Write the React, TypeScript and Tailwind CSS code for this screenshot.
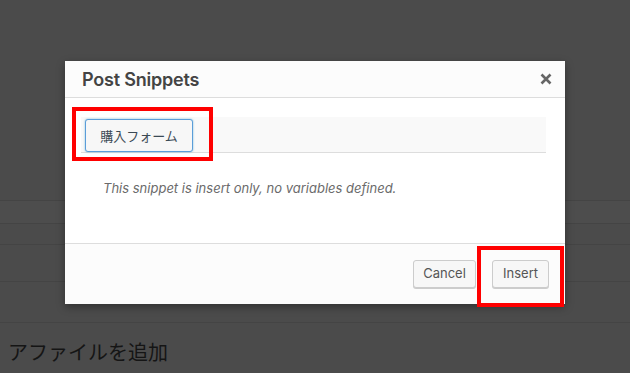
export default function App() {
  return (
    <div className="relative w-[630px] h-[373px] overflow-hidden bg-[#4b4b4b] font-['Inter','Noto_Sans_CJK_JP',sans-serif]">
      {/* page behind the overlay */}
      <div className="pt-[200px]">
        <div className="border-t border-[#444444] h-[23px] bg-[#4d4d4d]" />
        <div className="border-t border-[#444444] h-[21px]" />
        <div className="border-t border-[#444444] h-[37px]" />
        <div className="border-t border-[#444444] h-[41px]" />
        <div className="border-t border-[#444444] pl-[8px] pt-[16px] text-[20px] leading-[26px] text-[#151515] font-['Noto_Sans_CJK_JP',sans-serif]">
          アファイルを追加
        </div>
      </div>

      {/* modal */}
      <div className="absolute left-[65px] top-[61px] w-[500px] h-[243px] bg-white shadow-[0_3px_8px_rgba(0,0,0,0.35)] flex flex-col">
        <div className="h-[37px] bg-[#fcfcfc] border-b border-[#dddddd] flex items-center justify-between pl-[17px] pr-[13px]">
          <span className="text-[18px] font-semibold text-[#444444] tracking-[-0.2px]">Post Snippets</span>
          <svg width="12" height="12" viewBox="0 0 12 12">
            <path d="M1.5 1.5 L10.5 10.5 M10.5 1.5 L1.5 10.5" stroke="#666" strokeWidth="2.6" strokeLinecap="butt" />
          </svg>
        </div>
        <div className="flex-1 px-[16px] pt-[19px]">
          <div className="w-[465px] h-[36px] bg-[#f9f9f9] border-b border-[#dddddd] flex items-end pl-[4px]">
            <div className="w-[108px] h-[33px] rounded-[3px] border border-[#5b9dd9] bg-[#f7f7f7] shadow-[0_0_2px_rgba(30,140,190,0.6)] flex items-center justify-center text-[13px] text-[#3b4a55] font-['Noto_Sans_CJK_JP',sans-serif]">
              購入フォーム
            </div>
          </div>
          <p className="pl-[22px] pt-[26px] text-[13px] italic text-[#6b6b6b]">
            This snippet is insert only, no variables defined.
          </p>
        </div>
        <div className="h-[61px] bg-[#fcfcfc] border-t border-[#dddddd] flex items-center justify-end gap-[16px] pr-[16px]">
          <button className="w-[63px] h-[28px] rounded-[3px] border border-[#cccccc] bg-[#f7f7f7] shadow-[0_1px_0_#cccccc] text-[13px] text-[#555555]">
            Cancel
          </button>
          <button className="w-[57px] h-[28px] rounded-[3px] border border-[#cccccc] bg-[#f7f7f7] shadow-[0_1px_0_#cccccc] text-[13px] text-[#555555]">
            Insert
          </button>
        </div>
      </div>

      {/* highlight boxes */}
      <div className="absolute left-[72px] top-[107px] w-[141px] h-[54px] border-[4px] border-[#ff0000]" />
      <div className="absolute left-[477px] top-[246px] w-[87px] h-[61px] border-[4px] border-[#ff0000]" />
    </div>
  );
}
